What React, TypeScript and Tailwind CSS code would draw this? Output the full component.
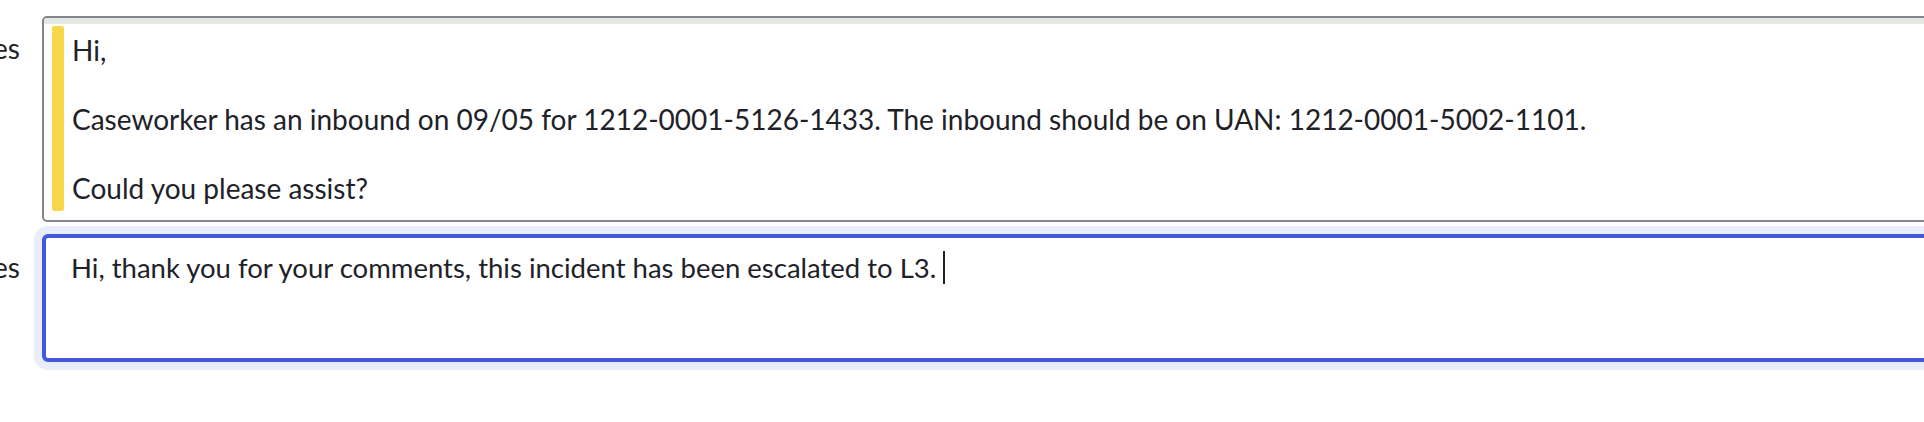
export default function App() {
  return (
    <div className="w-full h-[422px] overflow-hidden bg-white text-[#1e2228] text-[28px] leading-[34.5px] font-['Lato',sans-serif]">
      <div className="ml-[-140px] pt-[16px] flex flex-col gap-[12px]">
        {/* Customer note (read only) */}
        <div className="flex">
          <div className="w-[182px] shrink-0 text-right pr-[22px] pt-[15px] whitespace-nowrap">Notes</div>
          <div className="w-[1900px] shrink-0 rounded-[5px] border-2 border-[#81868f] overflow-hidden bg-white">
            <div className="h-[6px] bg-[#e6e8e6]" />
            <div className="flex pt-[2px] pl-[8px] pb-[9px]">
              <div className="w-[12px] shrink-0 rounded-[2px] bg-[#f8d74a]" />
              <div className="pl-[8px] pt-[7px] pb-[5px]">
                <p>Hi,</p>
                <p>&nbsp;</p>
                <p>Caseworker has an inbound on 09/05 for 1212-0001-5126-1433. The inbound should be on UAN: 1212-0001-5002-1101.</p>
                <p>&nbsp;</p>
                <p>Could you please assist?</p>
              </div>
            </div>
          </div>
        </div>

        {/* Reply box (focused) */}
        <div className="flex">
          <div className="w-[182px] shrink-0 text-right pr-[22px] pt-[16px] whitespace-nowrap">Notes</div>
          <div className="w-[1900px] h-[128px] shrink-0 rounded-[6px] border-4 border-[#4359db] shadow-[0_0_0_8px_#e8ecfb] bg-white pl-[25px] pt-[13px]">
            <p className="flex items-center text-[27.5px]">
              <span>Hi, thank you for your comments, this incident has been escalated to L3.</span>
              <span className="ml-[7px] w-[2px] h-[33px] bg-[#1e2228]" />
            </p>
          </div>
        </div>
      </div>
    </div>
  );
}
